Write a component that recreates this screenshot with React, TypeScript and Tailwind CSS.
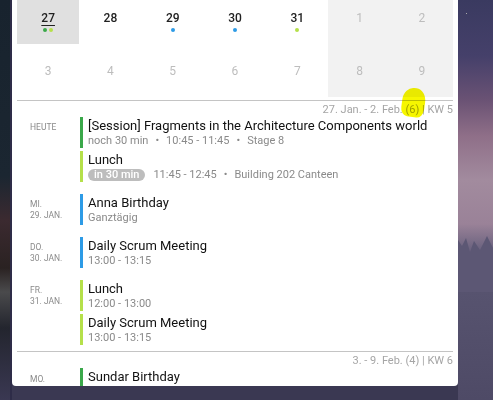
import React from 'react';

type Day = { n: string; muted?: boolean; today?: boolean; weekend?: boolean; dots?: string[] };

const ROW1: Day[] = [
  { n: '27', today: true, dots: ['bg-[#3aa84a]', 'bg-[#b5e04a]'] },
  { n: '28' },
  { n: '29', dots: ['bg-[#2d9be6]'] },
  { n: '30', dots: ['bg-[#2d9be6]'] },
  { n: '31', dots: ['bg-[#b5e04a]'] },
  { n: '1', muted: true, weekend: true },
  { n: '2', muted: true, weekend: true },
];

const ROW2: Day[] = [
  { n: '3', muted: true },
  { n: '4', muted: true },
  { n: '5', muted: true },
  { n: '6', muted: true },
  { n: '7', muted: true },
  { n: '8', muted: true, weekend: true },
  { n: '9', muted: true, weekend: true },
];

type Ev = { title: string; bar: string; sub?: React.ReactNode };

type Group = { label: string[]; events: Ev[] };

const Dot = () => <span className="mx-[7px]">•</span>;

const WEEK1: Group[] = [
  {
    label: ['Heute'],
    events: [
      {
        title: '[Session] Fragments in the Architecture Components world',
        bar: 'bg-[#3aa84a]',
        sub: (
          <>
            noch 30 min<Dot />10:45 - 11:45<Dot />Stage 8
          </>
        ),
      },
      {
        title: 'Lunch',
        bar: 'bg-[#b5e04a]',
        sub: (
          <>
            <span className="mr-[8px] inline-flex h-[12px] items-center rounded-full bg-[#bdbdbd] px-[6px] text-[11px] font-medium text-white">
              in 30 min
            </span>
            11:45 - 12:45<Dot />Building 202 Canteen
          </>
        ),
      },
    ],
  },
  { label: ['Mi.', '29. Jan.'], events: [{ title: 'Anna Birthday', bar: 'bg-[#2d9be6]', sub: 'Ganztägig' }] },
  { label: ['Do.', '30. Jan.'], events: [{ title: 'Daily Scrum Meeting', bar: 'bg-[#2d9be6]', sub: '13:00 - 13:15' }] },
  {
    label: ['Fr.', '31. Jan.'],
    events: [
      { title: 'Lunch', bar: 'bg-[#b5e04a]', sub: '12:00 - 13:00' },
      { title: 'Daily Scrum Meeting', bar: 'bg-[#b5e04a]', sub: '13:00 - 13:15' },
    ],
  },
];

function DayCell({ d, first }: { d: Day; first: boolean }) {
  const bg = d.today ? 'bg-[#e0e0e0]' : d.weekend ? 'bg-[#f2f2f2]' : 'bg-white';
  return (
    <div className={`flex flex-col items-center ${bg} ${first ? 'h-[44px] pt-[10px]' : 'h-[53px] pt-[19px]'}`}>
      <span
        className={`text-[12px] leading-[16px] ${d.muted ? 'text-[#bdbdbd]' : 'font-medium text-[#212121]'} ${d.today ? 'underline underline-offset-[3px] decoration-[1px]' : ''}`}
      >
        {d.n}
      </span>
      {d.dots && (
        <div className="mt-[2px] flex gap-[2px]">
          {d.dots.map((c, i) => (
            <span key={i} className={`h-[4px] w-[4px] rounded-full ${c}`} />
          ))}
        </div>
      )}
    </div>
  );
}

function EventRow({ ev }: { ev: Ev }) {
  return (
    <div className="flex">
      <div className={`w-[3px] shrink-0 ${ev.bar}`} />
      <div className="pl-[5px]">
        <div className="whitespace-nowrap text-[13px] leading-[17px] text-[#111]">{ev.title}</div>
        {ev.sub && <div className="flex items-center whitespace-nowrap text-[11px] leading-[14px] text-[#8a8a8a]">{ev.sub}</div>}
      </div>
    </div>
  );
}

function GroupRow({ g }: { g: Group }) {
  return (
    <div className="flex">
      <div className="w-[63px] shrink-0 pl-[13px] pt-[5px] text-[8.5px] uppercase leading-[11px] text-[#8a8a8a]">
        {g.label.map((l) => (
          <div key={l}>{l}</div>
        ))}
      </div>
      <div className="flex flex-col gap-[3px]">
        {g.events.map((ev, i) => (
          <EventRow key={i} ev={ev} />
        ))}
      </div>
    </div>
  );
}

export default function App() {
  return (
    <div className="flex h-[400px] w-[493px] overflow-hidden bg-[#3a3852]" style={{ fontFamily: 'Roboto, "Noto Sans", sans-serif' }}>
      <div className="h-full w-[10px] shrink-0 bg-[linear-gradient(180deg,#18232e_0%,#1b2631_44%,#3b2a30_55%,#2a2222_67%,#4a4a4c_73%,#23252e_82%,#3a3852_100%)]" />
      <div className="h-full w-[2px] shrink-0 bg-[#2e2c48]" />
      <div className="relative h-[386px] w-[446px] shrink-0 overflow-hidden rounded-b-[4px] bg-white px-[5px]">
        <div className="grid grid-cols-7">
          {ROW1.map((d) => (
            <DayCell key={d.n} d={d} first />
          ))}
          {ROW2.map((d) => (
            <DayCell key={d.n} d={d} first={false} />
          ))}
        </div>
        <div className="mt-[3px] h-px bg-[#c4c4c4]" />
        <div className="pt-[2px] text-right text-[11px] leading-[14px] text-[#a5a5a5]">27. Jan. - 2. Feb. (6) | KW 5</div>
        <div className="flex flex-col gap-[12px]">
          {WEEK1.map((g, i) => (
            <GroupRow key={i} g={g} />
          ))}
        </div>
        <div className="mt-[6px] h-px bg-[#c4c4c4]" />
        <div className="pt-[2px] text-right text-[11px] leading-[14px] text-[#a5a5a5]">3. - 9. Feb. (4) | KW 6</div>
        <div>
          <div className="flex">
            <div className="w-[63px] shrink-0 pl-[13px] pt-[6px] text-[8.5px] uppercase leading-[11px] text-[#8a8a8a]">Mo.</div>
            <div className="flex">
              <div className="w-[3px] shrink-0 bg-[#3aa84a]" />
              <div className="pl-[5px] pb-[8px] text-[13px] leading-[17px] text-[#111]">Sundar Birthday</div>
            </div>
          </div>
        </div>
        <div className="absolute left-[390px] top-[88px] h-[29px] w-[23px] rotate-[8deg] rounded-[45%_45%_30%_30%] bg-[#f6f600] mix-blend-multiply" />
      </div>
      <div className="relative h-full flex-1 bg-[linear-gradient(180deg,#3a3a60_0%,#45406a_14%,#6a5274_25%,#8f6f88_34%,#a28b9e_45%,#9a8298_56%,#6d6480_62%,#585470_70%,#4e4a66_100%)]">
        <span className="absolute left-[8px] top-[13px] h-[1px] w-[1px] bg-[#aaa]" />
        <svg className="absolute left-0 top-[232px]" width="35" height="60" viewBox="0 0 35 60">
          <path d="M0 8 L4 14 L8 6 L12 20 L16 9 L22 18 L29 4 L35 16 L35 60 L0 60 Z" fill="#5c5774" />
        </svg>
      </div>
    </div>
  );
}
